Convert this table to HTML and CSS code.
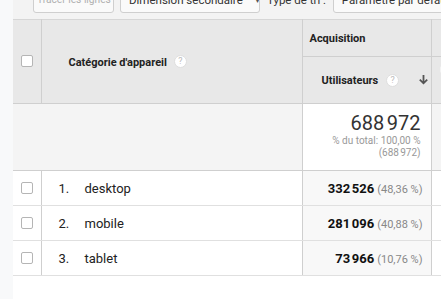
FILE: index.html
```html
<!DOCTYPE html>
<html lang="fr">
<head>
<meta charset="utf-8">
<link rel="stylesheet" href="styles.css">
</head>
<body>
<div class="page">
  <div class="gutter"></div>
  <div class="main">
    <div class="toolbar">
      <button class="btn btn-disabled btn-lines">Tracer les lignes</button>
      <button class="btn btn-dim">Dimension secondaire <span class="caret">▾</span></button>
      <span class="label">Type de tri :</span>
      <button class="btn btn-sort">Paramètre par défaut <span class="caret">▾</span></button>
    </div>
    <table class="grid">
      <colgroup>
        <col class="c-check"><col class="c-dim"><col class="c-users"><col class="c-next">
      </colgroup>
      <thead>
        <tr class="h1">
          <th rowspan="2" class="th-check"><span class="cb cb-head"></span></th>
          <th rowspan="2" class="th-dim"><span class="th-label">Catégorie d'appareil</span><span class="help">?</span></th>
          <th class="th-group">Acquisition</th>
          <th class="th-next"></th>
        </tr>
        <tr class="h2">
          <th class="th-users"><span class="th-label">Utilisateurs</span><span class="help">?</span><span class="sort">
            <svg width="11" height="11" viewBox="0 0 11 11"><path d="M5.5 1v8M1.8 5.6l3.7 3.7 3.7-3.7" fill="none" stroke="#555" stroke-width="1.8"/></svg></span></th>
          <th class="th-next"><span class="next-chip"></span></th>
        </tr>
      </thead>
      <tbody>
        <tr class="totals">
          <td class="td-blank"></td>
          <td class="td-blank"></td>
          <td class="td-total">
            <div class="total-big">688&#8239;972</div>
            <div class="total-sub">% du total: 100,00 %</div>
            <div class="total-sub">(688&#8239;972)</div>
          </td>
          <td class="td-next"></td>
        </tr>
        <tr class="row">
          <td class="td-check"><span class="cb"></span></td>
          <td class="td-dim"><span class="idx">1.</span><span class="name">desktop</span></td>
          <td class="td-val"><b>332&#8239;526</b> <span class="pct">(48,36 %)</span></td>
          <td class="td-next"></td>
        </tr>
        <tr class="row">
          <td class="td-check"><span class="cb"></span></td>
          <td class="td-dim"><span class="idx">2.</span><span class="name">mobile</span></td>
          <td class="td-val"><b>281&#8239;096</b> <span class="pct">(40,88 %)</span></td>
          <td class="td-next"></td>
        </tr>
        <tr class="row">
          <td class="td-check"><span class="cb"></span></td>
          <td class="td-dim"><span class="idx">3.</span><span class="name">tablet</span></td>
          <td class="td-val"><b>73&#8239;966</b> <span class="pct">(10,76 %)</span></td>
          <td class="td-next"></td>
        </tr>
      </tbody>
    </table>
  </div>
</div>
</body>
</html>
```
FILE: styles.css
```css
* { box-sizing: border-box; }
html, body { margin: 0; padding: 0; }
body {
  background: #f8f9fa;
  font-family: Roboto, "Liberation Sans", Arial, sans-serif;
  color: #222;
  width: 441px;
  height: 299px;
  overflow: hidden;
}
.page { display: flex; height: 299px; }
.gutter { width: 13px; flex: none; background: #f8f9fa; }
.main { flex: 1; background: #fff; overflow: hidden; }

.toolbar {
  background: #f3f3f3;
  height: 19px;
  display: flex;
  align-items: flex-start;
  padding-left: 20px;
  white-space: nowrap;
  overflow: hidden;
}
.btn {
  flex: none;
  font-family: inherit;
  font-size: 11.5px;
  height: 27px;
  margin-top: -14px;
  padding: 0 0 0 8px;
  background: #fafafa;
  border: 1px solid #cfcfcf;
  border-radius: 3px;
  color: #333;
  display: flex;
  align-items: center;
  justify-content: flex-start;
  overflow: hidden;
  white-space: nowrap;
}
.btn-lines { width: 81px; color: #b0b0b0; padding: 0 0 0 3px; font-size: 10.2px; }
.btn-dim { width: 140px; margin-left: 6px; padding-left: 8px; }
.btn-sort { width: 130px; margin-left: 7px; padding-left: 8px; }
.caret { margin-left: 12px; color: #555; font-size: 10px; }
.label { font-size: 11.5px; color: #333; line-height: 14px; margin-top: -7px; margin-left: 7px; }

.grid {
  border-collapse: collapse;
  table-layout: fixed;
  width: 450px;
  font-size: 13px;
}
.c-check { width: 28px; }
.c-dim { width: 261px; }
.c-users { width: 129px; }
.c-next { width: 32px; }

.grid th, .grid td { padding: 0; border: 1px solid #cfcfcf; }
.grid th:first-child, .grid td:first-child { border-left: none; }
.grid thead th { background: #e8e8e8; font-weight: 700; font-size: 11px; color: #222; }
.grid thead tr.h1 th { border-top: 1px solid #d6d6d6; }

tr.h1 { height: 37px; }
tr.h2 { height: 47px; }
tr.totals { height: 67px; }
tr.row { height: 35px; }

.th-check { text-align: left; }
.cb-head {
  display: block;
  width: 13px; height: 13px;
  margin-left: 8px;
  border: 1px solid #c8c8c8;
  background: #e8e8e8;
  margin-top: -1px;
}
.th-dim { text-align: left; padding-left: 27px !important; }
.th-label { vertical-align: middle; }
.help {
  display: inline-block;
  vertical-align: middle;
  width: 13px; height: 13px;
  margin-left: 7px;
  border-radius: 50%;
  background: #fff;
  border: 1px solid #dedede;
  color: #bbb;
  font-size: 9px;
  line-height: 11px;
  text-align: center;
  font-weight: 400;
}
.th-group { text-align: left; padding-left: 7px !important; vertical-align: middle; }
.th-users { text-align: left; padding-left: 19px !important; position: relative; }
.th-users .help { margin-left: 8px; }
.sort { position: absolute; right: 2px; top: 17px; width: 11px; height: 11px; }
.sort svg { display: block; }
.th-next { background: #e8e8e8; }
.next-chip { display: block; width: 3px; height: 7px; background: #f3f3f3; border-radius: 2px 0 0 2px; margin-left: 8px; margin-top: -14px; }

.totals .td-blank { background: #f4f4f4; border-left: none; border-right: none; }
.td-total { background: #fff; text-align: right; padding-right: 10px !important; vertical-align: top; padding-top: 8px !important; }
.total-big { font-size: 20px; color: #333; line-height: 23px; letter-spacing: -0.2px; }
.total-sub { font-size: 10px; color: #999; line-height: 12px; }
.totals .td-next { background: #f4f4f4; border-right: none; }

.row td { border-top: 1px solid #e0e0e0; border-bottom: 1px solid #e0e0e0; }
.row .td-dim { border-right: none; border-left: 1px solid #cfcfcf; }
.row .td-check { border-right: 1px solid #cfcfcf; }
.td-check { text-align: left; }
.cb {
  display: block;
  width: 12px; height: 12px;
  margin-left: 8px;
  border: 1px solid #b5b5b5;
  border-radius: 2px;
  background: #fff;
}
.td-dim { padding-left: 17px !important; color: #222; }
.idx { display: inline-block; width: 26px; }
.td-val { background: #f8f8f8; text-align: right; padding-right: 8px !important; font-size: 12px; border-left: 1px solid #cfcfcf !important; border-right: 1px solid #cfcfcf !important; }
.td-val b { font-weight: 700; color: #111; font-size: 13px; }
.pct { color: #888; font-size: 11px; }
.row .td-next { background: #fff; border-right: none; }
```
